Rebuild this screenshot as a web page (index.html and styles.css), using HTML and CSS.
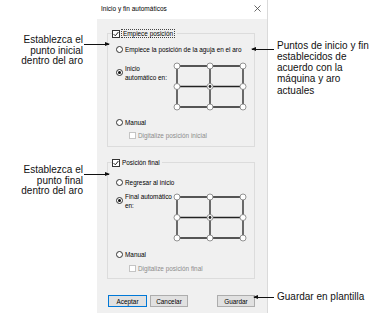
FILE: index.html
```html
<!DOCTYPE html>
<html lang="es">
<head>
<meta charset="utf-8">
<title>Inicio y fin automáticos</title>
<link rel="stylesheet" href="styles.css">
</head>
<body>
<div class="page">
  <div class="notes-left">
    <p class="note note-l note-start">Establezca el<br>punto inicial<br>dentro del aro<span class="arrow arrow-r"></span></p>
    <p class="note note-l note-end">Establezca el<br>punto final<br>dentro del aro<span class="arrow arrow-r"></span></p>
  </div>

  <div class="dialog">
    <div class="titlebar">
      <span class="title">Inicio y fin automáticos</span>
      <svg class="close" width="7" height="7" viewBox="0 0 7 7"><path d="M0.5 0.5 6.5 6.5M6.5 0.5 0.5 6.5" stroke="#444" stroke-width="0.8" fill="none"/></svg>
    </div>
    <div class="body">
      <fieldset class="group group-start">
        <legend class="legend"><span class="legend-in">
          <svg class="cb" width="8" height="8" viewBox="0 0 8 8"><rect x=".5" y=".5" width="7" height="7" fill="#fff" stroke="#333"/><path d="M1.6 4.1 3.3 5.8 6.4 2" fill="none" stroke="#222" stroke-width="1"/></svg>
          <span class="focus">Empiece posición</span></span></legend>
        <div class="opt opt-first"><span class="radio"></span><span>Empiece la posición de la aguja en el aro</span></div>
        <div class="opt-auto opt-auto-start">
          <div class="auto-label"><span class="radio on"></span><span class="auto-text">Inicio<br>automático en:</span></div>
          <svg class="hoop" width="74" height="49" viewBox="0 0 74 49">
            <path d="M4 4H70M4 24.5H70M4 45H70M4 4V45M37 4V45M70 4V45" stroke="#222" stroke-width="1.3" fill="none"/>
            <g fill="#fff" stroke="#7a7a7a" stroke-width="0.8">
              <circle cx="4" cy="4" r="3"/><circle cx="37" cy="4" r="3"/><circle cx="70" cy="4" r="3"/>
              <circle cx="4" cy="24.5" r="3"/><circle cx="37" cy="24.5" r="3"/><circle cx="70" cy="24.5" r="3"/>
              <circle cx="4" cy="45" r="3"/><circle cx="37" cy="45" r="3"/><circle cx="70" cy="45" r="3"/>
            </g>
            <circle cx="37" cy="24.5" r="1.4" fill="#222"/>
          </svg>
        </div>
        <div class="opt opt-manual-start"><span class="radio"></span><span>Manual</span></div>
        <div class="opt opt-digit opt-digit-start"><span class="cb-off"></span><span>Digitalize posición inicial</span></div>
      </fieldset>

      <fieldset class="group group-end">
        <legend class="legend"><span class="legend-in">
          <svg class="cb" width="8" height="8" viewBox="0 0 8 8"><rect x=".5" y=".5" width="7" height="7" fill="#fff" stroke="#333"/><path d="M1.6 4.1 3.3 5.8 6.4 2" fill="none" stroke="#222" stroke-width="1"/></svg>
          <span class="legend-text">Posición final</span></span></legend>
        <div class="opt opt-return"><span class="radio"></span><span>Regresar al inicio</span></div>
        <div class="opt-auto opt-auto-end">
          <div class="auto-label"><span class="radio on"></span><span class="auto-text">Final automático<br>en:</span></div>
          <svg class="hoop hoop-end" width="74" height="49" viewBox="0 0 74 49">
            <path d="M4 4H70M4 24.5H70M4 45H70M4 4V45M37 4V45M70 4V45" stroke="#222" stroke-width="1.3" fill="none"/>
            <g fill="#fff" stroke="#7a7a7a" stroke-width="0.8">
              <circle cx="4" cy="4" r="3"/><circle cx="37" cy="4" r="3"/><circle cx="70" cy="4" r="3"/>
              <circle cx="4" cy="24.5" r="3"/><circle cx="37" cy="24.5" r="3"/><circle cx="70" cy="24.5" r="3"/>
              <circle cx="4" cy="45" r="3"/><circle cx="37" cy="45" r="3"/><circle cx="70" cy="45" r="3"/>
            </g>
            <circle cx="37" cy="24.5" r="1.4" fill="#222"/>
          </svg>
        </div>
        <div class="opt opt-manual-end"><span class="radio"></span><span>Manual</span></div>
        <div class="opt opt-digit opt-digit-end"><span class="cb-off"></span><span>Digitalize posición final</span></div>
      </fieldset>

      <div class="buttons">
        <button class="btn btn-default" type="button">Aceptar</button>
        <button class="btn btn-cancel" type="button">Cancelar</button>
        <button class="btn btn-save" type="button">Guardar</button>
      </div>
    </div>
  </div>

  <div class="notes-right">
    <p class="note note-r note-points">Puntos de inicio y fin<br>establecidos de<br>acuerdo con la<br>máquina y aro<br>actuales<span class="arrow arrow-l"></span></p>
    <p class="note note-r note-save">Guardar en plantilla<span class="arrow arrow-l arrow-save"></span></p>
  </div>
</div>
</body>
</html>
```

FILE: styles.css
```css
* { box-sizing: border-box; }

html, body {
  margin: 0;
  padding: 0;
  background: #fff;
}

.page {
  display: flex;
  width: 389px;
  height: 331px;
  font-family: "Liberation Sans", Arial, sans-serif;
}

/* ---------- annotations ---------- */
.notes-left {
  width: 97px;
  flex: none;
}

.note {
  position: relative;
  margin: 0;
  font-size: 10px;
  line-height: 10.5px;
  color: #111;
}

.note-l {
  text-align: right;
  padding-right: 14px;
}

.note-start { margin-top: 35px; }
.note-end { margin-top: 98.5px; }

.notes-right {
  flex: 1;
  padding-left: 9px;
}

.note-r { line-height: 11.3px; }
.note-points { margin-top: 39.5px; }
.note-save { margin-top: 195px; }

.arrow {
  position: absolute;
  height: 1px;
  background: #111;
}

.arrow-r {
  left: 84px;
  width: 25px;
  top: 9px;
}

.arrow-r::after {
  content: "";
  position: absolute;
  right: -1px;
  top: -2px;
  border-left: 5px solid #111;
  border-top: 2.5px solid transparent;
  border-bottom: 2.5px solid transparent;
}

.arrow-l {
  left: -25px;
  width: 22px;
  top: 9px;
}

.arrow-save {
  left: -23px;
  width: 20px;
  top: 6px;
}

.arrow-l::before {
  content: "";
  position: absolute;
  left: -1px;
  top: -2px;
  border-right: 5px solid #111;
  border-top: 2.5px solid transparent;
  border-bottom: 2.5px solid transparent;
}

/* ---------- dialog ---------- */
.dialog {
  width: 171px;
  height: 313px;
  flex: none;
  background: #f0f0f0;
  border-right: 1px solid #dadada;
  display: flex;
  flex-direction: column;
  font-size: 6.4px;
  color: #000;
}

.titlebar {
  height: 19px;
  flex: none;
  background: #fff;
  display: flex;
  align-items: center;
  justify-content: space-between;
  padding: 0 6px 2px 4px;
  font-size: 6.5px;
}

.close { display: block; }

.body {
  padding: 10px 12px 0 10px;
  display: flex;
  flex-direction: column;
}

.group {
  margin: 0;
  padding: 0;
  border: 1px solid #dcdcdc;
  min-width: 0;
}

.group-start { padding-bottom: 6px; }
.group-end { margin-top: 11px; padding-bottom: 5px; }

.legend {
  padding: 0 2px 0 0;
  margin-left: 4px;
  height: 9px;
}

.legend-in {
  display: flex;
  align-items: center;
  height: 9px;
  gap: 1px;
}

.cb { display: block; flex: none; }

.focus {
  border: 1px dotted #444;
  padding: 0 1px;
  line-height: 7px;
}

.legend-text { padding-left: 1px; }

.opt {
  display: flex;
  align-items: center;
  height: 10px;
  padding-left: 8px;
  gap: 2px;
}

.radio {
  width: 7px;
  height: 7px;
  flex: none;
  border: 1px solid #333;
  border-radius: 50%;
  background: #fff;
  display: flex;
  align-items: center;
  justify-content: center;
}

.radio.on::after {
  content: "";
  width: 3px;
  height: 3px;
  border-radius: 50%;
  background: #111;
}

.opt-first { margin-top: 6px; }

.opt-auto {
  display: flex;
  justify-content: space-between;
  align-items: flex-start;
  padding: 0 7px 0 8px;
}

.opt-auto-start { margin-top: 8px; }
.opt-auto-end { margin-top: 4px; }

.auto-label {
  display: flex;
  align-items: center;
  gap: 2px;
}

.opt-auto-start .auto-label { margin-top: 1.5px; }
.opt-auto-end .auto-label { margin-top: 0.5px; }

.auto-text { line-height: 9px; }

.hoop { display: block; flex: none; }
.hoop-end { margin-top: 2px; }

.opt-manual-start { margin-top: 6px; }
.opt-digit-start { margin-top: 3px; }
.opt-return { margin-top: 10px; }
.opt-manual-end { margin-top: 7px; }
.opt-digit-end { margin-top: 4px; }

.opt-digit {
  padding-left: 21px;
  color: #8c8c8c;
}

.cb-off {
  width: 7px;
  height: 7px;
  flex: none;
  border: 1px solid #c4c4c4;
  background: #fff;
}

.buttons {
  display: flex;
  margin-top: 16px;
}

.btn {
  height: 12px;
  margin: 0;
  padding: 0;
  font-family: inherit;
  font-size: 6.4px;
  color: #000;
  background: #e1e1e1;
  border: 1px solid #adadad;
  border-radius: 0;
}

.btn-default {
  width: 39px;
  margin-left: 1px;
  border-color: #0078d7;
}

.btn-cancel {
  width: 38px;
  margin-left: 3px;
}

.btn-save {
  width: 38px;
  margin-left: auto;
}
```
